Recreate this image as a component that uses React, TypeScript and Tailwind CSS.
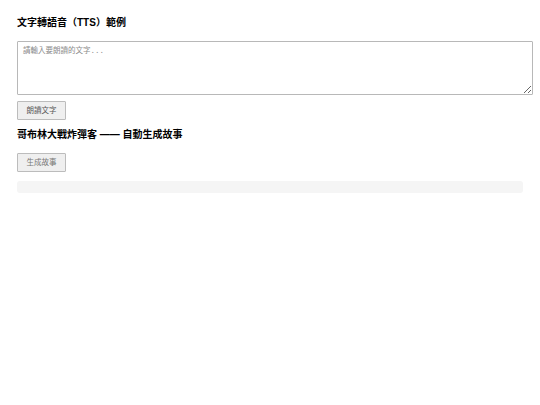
export default function App() {
  return (
    <div
      className="min-h-screen bg-white px-[17px] pt-[16px] text-black"
      style={{ fontFamily: '"Liberation Sans", "Noto Sans CJK TC", sans-serif' }}
    >
      <h1 className="text-[10px] font-bold leading-[14px]">文字轉語音（TTS）範例</h1>

      <textarea
        className="mt-[11px] block h-[54px] w-[516px] rounded-[1px] border border-[#b8b8b8] px-[5px] py-[4px] font-['Liberation_Mono','Noto_Sans_CJK_TC',monospace] text-[7.5px] leading-[10px] placeholder:text-[#8a8a8a] focus:outline-none"
        placeholder="請輸入要朗讀的文字..."
      />

      <button className="mt-[6px] block h-[19px] w-[49px] rounded-[1px] border border-[#bcbcbc] bg-[#efefef] text-[7.5px] text-[#555]">
        朗讀文字
      </button>

      <h2 className="mt-[8px] text-[10px] font-bold leading-[14px]">哥布林大戰炸彈客 —— 自動生成故事</h2>

      <button className="mt-[11px] block h-[19px] w-[49px] rounded-[1px] border border-[#bcbcbc] bg-[#efefef] text-[7.5px] text-[#777]">
        生成故事
      </button>

      <div className="mt-[9px] h-[12px] w-[506px] rounded-[3px] bg-[#f5f5f5]" />
    </div>
  );
}
